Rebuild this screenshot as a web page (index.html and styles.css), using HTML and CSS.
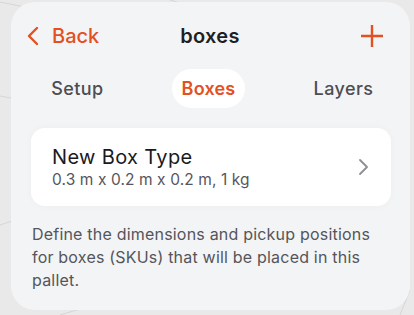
FILE: index.html
```html
<!DOCTYPE html>
<html>
<head>
<meta charset="utf-8">
<link rel="stylesheet" href="styles.css">
</head>
<body>
<svg class="bg-lines" width="414" height="315" viewBox="0 0 414 315">
  <path d="M0 2 L60 14" />
  <path d="M0 225 L12 221" />
  <path d="M0 96 L11 98" />
  <path d="M170 0 L190 6" />
  <path d="M60 315 L80 309" />
  <path d="M410 290 L400 315" />
</svg>
<div class="panel">
  <div class="header">
    <div class="back">
      <svg class="chev" width="14" height="20" viewBox="0 0 14 20"><path d="M11 2 L3 10 L11 18" /></svg>
      <span>Back</span>
    </div>
    <div class="title">boxes</div>
    <svg class="plus" width="24" height="24" viewBox="0 0 24 24"><path d="M12 1 V23 M1 12 H23" /></svg>
  </div>
  <div class="tabs">
    <div class="tab"><span class="tab-label">Setup</span></div>
    <div class="tab"><span class="tab-label active">Boxes</span></div>
    <div class="tab"><span class="tab-label">Layers</span></div>
  </div>
  <div class="card">
    <div class="card-text">
      <div class="card-title">New Box Type</div>
      <div class="card-sub">0.3 m x 0.2 m x 0.2 m, 1 kg</div>
    </div>
    <svg class="card-chev" width="12" height="20" viewBox="0 0 12 20"><path d="M3 3 L10 10 L3 17" /></svg>
  </div>
  <p class="desc">Define the dimensions and pickup positions for boxes (SKUs) that will be placed in this pallet.</p>
</div>
</body>
</html>
```
FILE: styles.css
```css
html, body {
  margin: 0;
  padding: 0;
}
body {
  width: 414px;
  height: 315px;
  background: #e9e9ea;
  font-family: Inter, "Noto Sans", sans-serif;
  overflow: hidden;
  position: relative;
}
.bg-lines {
  position: absolute;
  left: 0;
  top: 0;
}
.bg-lines path {
  stroke: #d6d6d8;
  stroke-width: 1;
  fill: none;
}
.panel {
  position: relative;
  margin: 2px 0 0 11px;
  width: 399px;
  height: 308px;
  box-sizing: border-box;
  background: #f3f4f6;
  border-radius: 24px;
  padding: 20px 0 0 0;
}
.header {
  display: flex;
  align-items: center;
  justify-content: space-between;
  height: 28px;
  padding: 0 26px 0 15px;
}
.back {
  display: flex;
  align-items: center;
  gap: 12px;
  color: #e2511f;
  font-size: 20px;
  font-weight: 500;
  width: 100px;
}
.chev path {
  stroke: #e2511f;
  stroke-width: 2.4;
  fill: none;
  stroke-linecap: round;
  stroke-linejoin: round;
}
.title {
  font-size: 20px;
  font-weight: 600;
  color: #1f1f22;
  margin-left: 10px;
  letter-spacing: 0.3px;
}
.plus {
  margin-left: 76px;
}
.plus path {
  stroke: #e2511f;
  stroke-width: 2.4;
  fill: none;
}
.tabs {
  display: grid;
  grid-template-columns: 1fr 1fr 1fr;
  margin-top: 19px;
  height: 39px;
}
.tab {
  display: flex;
  justify-content: center;
  align-items: center;
}
.tab-label {
  font-size: 18px;
  font-weight: 500;
  letter-spacing: 0.4px;
  color: #4d4d52;
  height: 39px;
  line-height: 39px;
  padding: 0 10px;
  border-radius: 20px;
}
.tab-label.active {
  background: #ffffff;
  color: #e2511f;
  font-weight: 600;
  letter-spacing: 0.2px;
  margin-right: 4px;
}
.card {
  margin: 20px 19px 0 20px;
  height: 78px;
  box-sizing: border-box;
  background: #ffffff;
  border-radius: 14px;
  box-shadow: 0 0 8px rgba(0, 0, 0, 0.03);
  display: flex;
  align-items: center;
  justify-content: space-between;
  padding: 0 22px 0 21px;
}
.card-title {
  font-size: 20px;
  font-weight: 400;
  color: #1a1a1d;
  line-height: 24px;
  letter-spacing: 0.35px;
}
.card-sub {
  font-size: 15.5px;
  color: #56565c;
  line-height: 20px;
  margin-top: 1px;
  letter-spacing: 0.1px;
}
.card-chev path {
  stroke: #8e8e93;
  stroke-width: 1.8;
  fill: none;
  stroke-linecap: round;
  stroke-linejoin: round;
}
.desc {
  margin: 17px 30px 0 21px;
  font-size: 16px;
  line-height: 23px;
  color: #55555a;
  letter-spacing: 0.2px;
}
```
